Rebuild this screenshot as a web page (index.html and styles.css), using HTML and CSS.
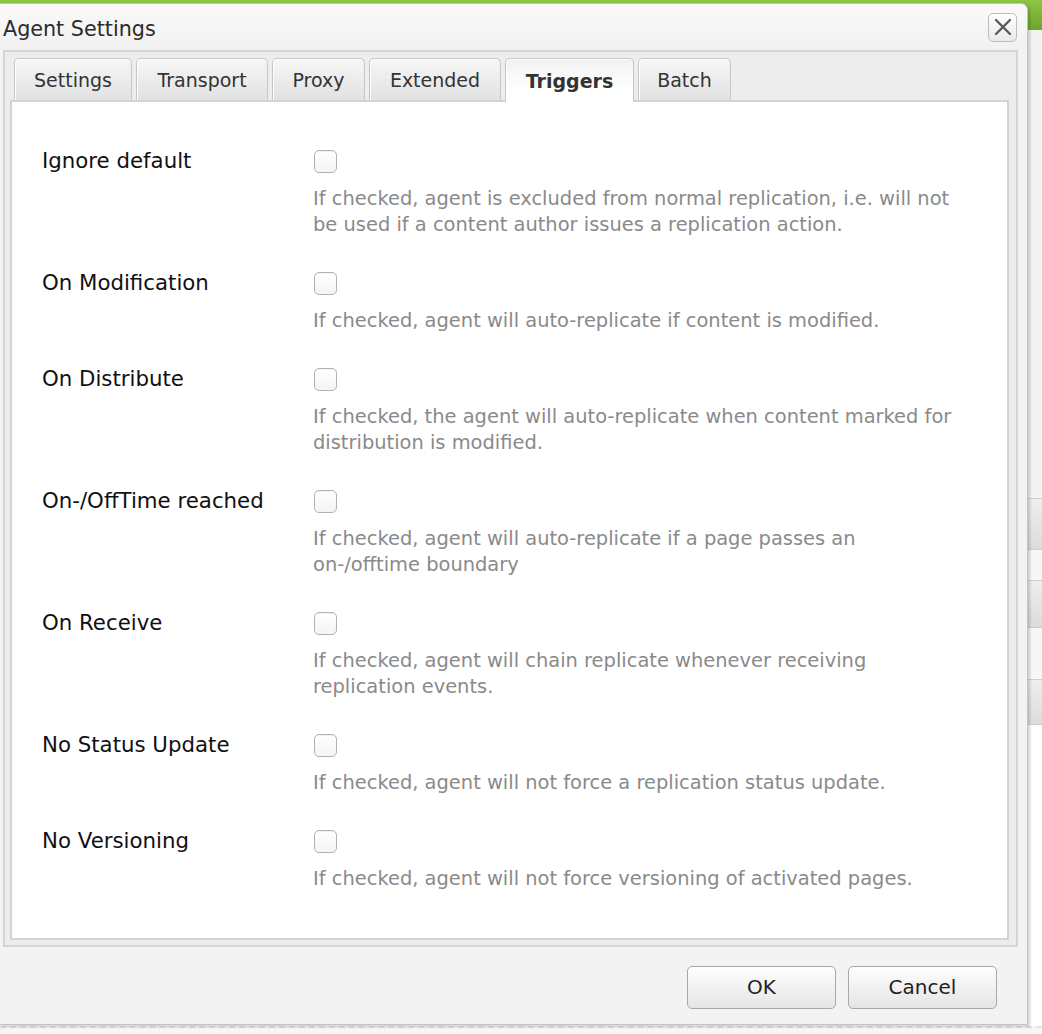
FILE: index.html
```html
<!DOCTYPE html>
<html lang="en">
<head>
<meta charset="utf-8">
<title>Agent Settings</title>
<link rel="stylesheet" href="styles.css">
</head>
<body>
<div class="backdrop">
  <div class="backdrop-bar"></div>
  <div class="backdrop-panel"></div>
  <div class="backdrop-rows">
    <div class="backdrop-row dark r1"></div>
    <div class="backdrop-row r2"></div>
    <div class="backdrop-row dark r3"></div>
    <div class="backdrop-row r4"></div>
    <div class="backdrop-row dark r5"></div>
  </div>
  <div class="backdrop-fill"></div>
  <div class="backdrop-foot"></div>
</div>

<div class="dialog">
  <div class="dialog-header">
    <span class="dialog-title">Agent Settings</span>
    <button class="close-btn" type="button" aria-label="Close">
      <svg width="18" height="18" viewBox="0 0 18 18"><path d="M2 2 L16 16 M16 2 L2 16" stroke="#5a5a5a" stroke-width="2.4" stroke-linecap="round" fill="none"/></svg>
    </button>
  </div>

  <div class="tabpanel">
    <div class="tabs">
      <div class="tab tab-settings">Settings</div>
      <div class="tab tab-transport">Transport</div>
      <div class="tab tab-proxy">Proxy</div>
      <div class="tab tab-extended">Extended</div>
      <div class="tab tab-triggers active">Triggers</div>
      <div class="tab tab-batch">Batch</div>
    </div>
    <div class="tab-body">
      <div class="row">
        <div class="label">Ignore default</div>
        <div class="check-cell"><input class="check" type="checkbox"></div>
        <div class="desc">If checked, agent is excluded from normal replication, i.e. will not<br>be used if a content author issues a replication action.</div>
      </div>
      <div class="row">
        <div class="label">On Modification</div>
        <div class="check-cell"><input class="check" type="checkbox"></div>
        <div class="desc">If checked, agent will auto-replicate if content is modified.</div>
      </div>
      <div class="row">
        <div class="label">On Distribute</div>
        <div class="check-cell"><input class="check" type="checkbox"></div>
        <div class="desc">If checked, the agent will auto-replicate when content marked for<br>distribution is modified.</div>
      </div>
      <div class="row">
        <div class="label">On-/OffTime reached</div>
        <div class="check-cell"><input class="check" type="checkbox"></div>
        <div class="desc">If checked, agent will auto-replicate if a page passes an<br>on-/offtime boundary</div>
      </div>
      <div class="row">
        <div class="label">On Receive</div>
        <div class="check-cell"><input class="check" type="checkbox"></div>
        <div class="desc">If checked, agent will chain replicate whenever receiving<br>replication events.</div>
      </div>
      <div class="row">
        <div class="label">No Status Update</div>
        <div class="check-cell"><input class="check" type="checkbox"></div>
        <div class="desc">If checked, agent will not force a replication status update.</div>
      </div>
      <div class="row">
        <div class="label">No Versioning</div>
        <div class="check-cell"><input class="check" type="checkbox"></div>
        <div class="desc">If checked, agent will not force versioning of activated pages.</div>
      </div>
    </div>
  </div>

  <div class="dialog-footer">
    <button class="btn" type="button">OK</button>
    <button class="btn" type="button">Cancel</button>
  </div>
</div>
</body>
</html>
```

FILE: styles.css
```css
* { box-sizing: border-box; }
html, body { margin: 0; padding: 0; }
body {
  width: 1042px;
  height: 1034px;
  overflow: hidden;
  position: relative;
  background: #ffffff;
  font-family: "DejaVu Sans", Verdana, sans-serif;
}

/* page behind the dialog */
.backdrop { display: flex; flex-direction: column; height: 100%; }
.backdrop-bar { height: 30px; background: linear-gradient(#8cc443, #6ea52c); }
.backdrop-panel { height: 469px; background: #f3f3f3; border-bottom: 1px solid #cfcfcf; }
.backdrop-rows { display: flex; flex-direction: column; }
.backdrop-row { background: #f7f7f7; border-bottom: 1px solid #cdcdcd; }
.backdrop-row.dark { background: linear-gradient(#eeeeee, #dcdcdc); }
.r1 { height: 51px; }
.r2 { height: 31px; }
.r3 { height: 47px; }
.r4 { height: 52px; }
.r5 { height: 45px; }
.backdrop-fill { flex: 1; background: #ffffff; }
.backdrop-foot { height: 8px; border-top: 2px dashed #e2e2e2; background: #f7f7f7; }

/* dialog window */
.dialog {
  position: absolute;
  left: -1px;
  top: 3px;
  width: 1029px;
  height: 1022px;
  background: #f3f3f3;
  border: 1px solid #c4c4c4;
  border-top-right-radius: 7px;
  box-shadow: 2px 2px 3px rgba(0, 0, 0, 0.18);
  display: flex;
  flex-direction: column;
}
.dialog-header {
  height: 46px;
  display: flex;
  align-items: center;
  justify-content: space-between;
  padding: 0 10px 0 3px;
  background: linear-gradient(#fafafa, #f1f1f1);
  border-top-right-radius: 7px;
}
.dialog-title { font-size: 20.7px; color: #2b2b2b; margin-top: 3px; }
.close-btn {
  width: 29px;
  height: 29px;
  padding: 0;
  border: 1px solid #bdbdbd;
  border-radius: 5px;
  background: linear-gradient(#ffffff, #e9e9e9);
  display: flex;
  align-items: center;
  justify-content: center;
}

/* tab panel */
.tabpanel {
  margin: 0 9px 0 3px;
  height: 897px;
  border: 2px solid #d5d5d5;
  background: #ededed;
  padding: 0 7px 5px 5px;
  display: flex;
  flex-direction: column;
}
.tabs {
  height: 48px;
  display: flex;
  align-items: flex-start;
  gap: 4px;
  padding: 6px 0 0 4px;
}
.tab {
  height: 42px;
  border: 1px solid #c6c6c6;
  border-bottom: none;
  border-radius: 5px 5px 0 0;
  background: linear-gradient(#f6f6f6, #e2e2e2);
  box-shadow: inset 1px 1px 0 #ffffff;
  display: flex;
  align-items: center;
  justify-content: center;
  font-size: 19px;
  color: #333333;
}
.tab.active {
  height: 44px;
  position: relative;
  z-index: 1;
  font-weight: bold;
  background: linear-gradient(#f1f1f1, #ffffff 70%);
}
.tab-settings { width: 118px; }
.tab-transport { width: 132px; }
.tab-proxy { width: 93px; }
.tab-extended { width: 132px; }
.tab-triggers { width: 129px; }
.tab-batch { width: 93px; }

.tab-body {
  height: 840px;
  border: 2px solid #d3d3d3;
  background: #ffffff;
  padding: 46px 30px 0 30px;
}
.row {
  display: grid;
  grid-template-columns: 271px 1fr;
  margin-bottom: 32px;
}
.label {
  line-height: 26px;
  font-size: 21.3px;
  color: #111111;
}
.check-cell { height: 26px; display: flex; align-items: center; }
.check {
  appearance: none;
  -webkit-appearance: none;
  width: 23px;
  height: 23px;
  margin: 0 0 0 1px;
  border: 1px solid #b2b2b2;
  border-radius: 5px;
  background: linear-gradient(#ffffff, #f4f4f4);
  box-shadow: inset 0 1px 1px rgba(0, 0, 0, 0.06);
}
.desc {
  grid-column: 2;
  margin-top: 12px;
  line-height: 26px;
  font-size: 19.45px;
  color: #8a8a8a;
}

/* footer */
.dialog-footer {
  flex: 1;
  display: flex;
  justify-content: flex-end;
  align-items: center;
  gap: 12px;
  padding: 3px 30px 0 0;
}
.btn {
  width: 149px;
  height: 43px;
  border: 1px solid #a8a8a8;
  border-radius: 5px;
  background: linear-gradient(#fefefe, #e5e5e5);
  font-family: "DejaVu Sans", Verdana, sans-serif;
  font-size: 20px;
  color: #222222;
  padding: 0;
}
```
